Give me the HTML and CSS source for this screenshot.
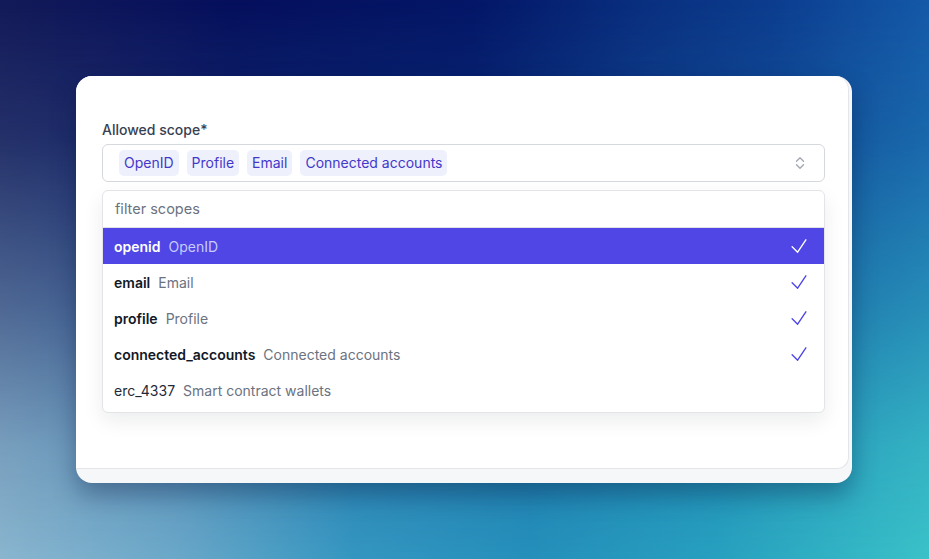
FILE: index.html
```html
<!DOCTYPE html>
<html lang="en">
<head>
<meta charset="utf-8">
<title>Allowed scope</title>
<link rel="stylesheet" href="styles.css">
</head>
<body>
<div class="card">
  <div class="panel">
    <label class="label">Allowed scope*</label>
    <div class="select">
      <div class="chips">
        <span class="chip">OpenID</span>
        <span class="chip">Profile</span>
        <span class="chip">Email</span>
        <span class="chip">Connected accounts</span>
      </div>
      <svg class="updown" width="20" height="20" viewBox="0 0 20 20" fill="none" stroke="#a3a8b1" stroke-width="1.4" stroke-linecap="round" stroke-linejoin="round"><path d="M6.5 8.2L10 4.8l3.5 3.4"/><path d="M6.5 11.8L10 15.2l3.5-3.4"/></svg>
    </div>
    <div class="menu">
      <div class="search">filter scopes</div>
      <ul class="options">
        <li class="option active"><b>openid</b><span class="desc">OpenID</span><svg class="check" viewBox="0 0 24 24" fill="none" stroke="currentColor" stroke-width="1.5" stroke-linecap="round" stroke-linejoin="round"><path d="M4.5 12.75l6 6 9-13.5"/></svg></li>
        <li class="option"><b>email</b><span class="desc">Email</span><svg class="check" viewBox="0 0 24 24" fill="none" stroke="currentColor" stroke-width="1.5" stroke-linecap="round" stroke-linejoin="round"><path d="M4.5 12.75l6 6 9-13.5"/></svg></li>
        <li class="option"><b>profile</b><span class="desc">Profile</span><svg class="check" viewBox="0 0 24 24" fill="none" stroke="currentColor" stroke-width="1.5" stroke-linecap="round" stroke-linejoin="round"><path d="M4.5 12.75l6 6 9-13.5"/></svg></li>
        <li class="option"><b>connected_accounts</b><span class="desc">Connected accounts</span><svg class="check" viewBox="0 0 24 24" fill="none" stroke="currentColor" stroke-width="1.5" stroke-linecap="round" stroke-linejoin="round"><path d="M4.5 12.75l6 6 9-13.5"/></svg></li>
        <li class="option"><span class="plain">erc_4337</span><span class="desc">Smart contract wallets</span></li>
      </ul>
    </div>
  </div>
</div>
</body>
</html>
```

FILE: styles.css
```css
* { box-sizing: border-box; }
html {
  height: 100%;
  background: linear-gradient(to right, #131a58 0%, #050f5c 25%, #041667 51%, #0a3080 70%, #0c3c8e 83%, #1459a8 100%);
}
body {
  margin: 0;
  min-height: 100%;
  padding: 76px 0 0 76px;
  font-family: "Inter", "Liberation Sans", sans-serif;
  font-size: 14px;
  color: #111827;
  overflow: hidden;
}
body::before {
  content: "";
  position: fixed;
  inset: 0;
  z-index: -1;
  background: linear-gradient(to right, #8ab6cf 0%, #6aa8c9 19%, #3497c1 38%, #2590bb 57%, #27a0bf 77%, #3ac2c8 100%);
  -webkit-mask-image: linear-gradient(to bottom, rgba(0,0,0,0) 0%, rgba(0,0,0,0.15) 25%, rgba(0,0,0,0.5) 55%, rgba(0,0,0,0.85) 80%, #000 100%);
  mask-image: linear-gradient(to bottom, rgba(0,0,0,0) 0%, rgba(0,0,0,0.15) 25%, rgba(0,0,0,0.5) 55%, rgba(0,0,0,0.85) 80%, #000 100%);
}
.card {
  width: 776px;
  background: #f6f7f9;
  border-radius: 16px;
  padding: 0 3px 14px 0;
  box-shadow: 0 12px 24px rgba(5, 20, 60, 0.35);
}
.panel {
  background: #fff;
  border-radius: 16px 14px 12px 0;
  border-right: 1px solid #e3e5e9;
  border-bottom: 1px solid #e3e5e9;
  padding: 44px 23px 55px 26px;
  display: flex;
  flex-direction: column;
}
.label {
  font-weight: 500;
  color: #374151;
  line-height: 20px;
  margin-bottom: 4px;
}
.select {
  height: 38px;
  border: 1px solid #d5d8dd;
  border-radius: 6px;
  display: flex;
  align-items: center;
  padding: 0 14px 0 16px;
}
.chips { display: flex; gap: 8px; flex: 1; }
.chip {
  background: #eef0fc;
  color: #4338ca;
  border-radius: 5px;
  height: 26px;
  line-height: 26px;
  padding: 0 5px;
}
.updown { display: block; }
.menu {
  margin-top: 8px;
  border: 1px solid #e2e4e8;
  border-radius: 6px;
  background: #fff;
  box-shadow: 0 8px 20px rgba(17, 24, 39, 0.08);
  padding-bottom: 4px;
  overflow: hidden;
}
.search {
  height: 37px;
  line-height: 36px;
  border-bottom: 1px solid #e0e2e6;
  border-radius: 6px 6px 0 0;
  padding: 0 12px;
  color: #6b7280;
  font-size: 14.5px;
}
.options { list-style: none; margin: 0; padding: 0; }
.option {
  height: 36px;
  display: flex;
  align-items: center;
  padding: 0 14px 0 11px;
  gap: 8px;
}
.option b { font-weight: 600; color: #111827; }
.plain { color: #1f2937; }
.desc { color: #6b7280; flex: 1; }
.check { width: 22px; height: 22px; color: #4f46e5; }
.option.active { background: #4f46e5; }
.option.active b { color: #fff; }
.option.active .desc { color: #c7cbf8; }
.option.active .check { color: #fff; }
```
